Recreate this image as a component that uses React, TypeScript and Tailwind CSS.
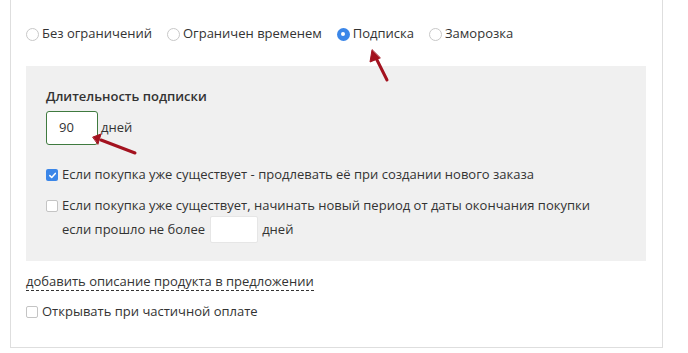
import React from "react";

function Radio({ checked, label }: { checked?: boolean; label: string }) {
  return (
    <label className="flex items-center gap-[3px]">
      {checked ? (
        <span className="w-[13px] h-[13px] rounded-full bg-[#3b86e8] flex items-center justify-center">
          <span className="w-[4px] h-[4px] rounded-full bg-white" />
        </span>
      ) : (
        <span className="w-[13px] h-[13px] rounded-full border border-[#c8c8c8] bg-white" />
      )}
      <span>{label}</span>
    </label>
  );
}

function Check({ checked }: { checked?: boolean }) {
  return checked ? (
    <span className="w-[12px] h-[12px] rounded-[2px] bg-[#3b86e8] flex items-center justify-center shrink-0">
      <svg width="9" height="9" viewBox="0 0 9 9">
        <path d="M1.8 4.6 L3.7 6.5 L7.3 2.4" stroke="white" strokeWidth="1.5" fill="none" strokeLinecap="round" strokeLinejoin="round" />
      </svg>
    </span>
  ) : (
    <span className="w-[12px] h-[12px] rounded-[2px] border border-[#c4c4c4] bg-white shrink-0" />
  );
}

export default function App() {
  return (
    <div className="relative w-[688px] h-[353px] bg-white text-[13px] text-[#333]" style={{ fontFamily: "'Open Sans', sans-serif" }}>
      <div className="ml-[10px] w-[653px] h-[348px] border-x border-b border-[#dedede] pl-[15px] pt-[25px]">
        <div className="flex items-center gap-[15px] h-[18px]">
          <Radio label="Без ограничений" />
          <Radio label="Ограничен временем" />
          <Radio checked label="Подписка" />
          <Radio label="Заморозка" />
        </div>
        <div className="mt-[23px] w-[620px] h-[195px] bg-[#f0f0f0] pl-[20px] pt-[21px]">
          <div className="font-semibold h-[18px] leading-[18px]">Длительность подписки</div>
          <div className="mt-[6px] flex items-center gap-[3px]">
            <div className="w-[52px] h-[34px] rounded-[3px] border border-[#3f7a3f] bg-white flex items-center pl-[12px]">90</div>
            <span>дней</span>
          </div>
          <div className="mt-[21px] flex items-center gap-[4px] h-[18px]">
            <Check checked />
            <span>Если покупка уже существует - продлевать её при создании нового заказа</span>
          </div>
          <div className="mt-[13px] flex items-center gap-[4px] h-[18px]">
            <Check />
            <span>Если покупка уже существует, начинать новый период от даты окончания покупки</span>
          </div>
          <div className="flex items-center pl-[16px] mt-[1px]">
            <span>если прошло не более</span>
            <div className="ml-[5px] w-[48px] h-[27px] bg-white border border-[#e6e6e6] rounded-[2px]" />
            <span className="ml-[4px]">дней</span>
          </div>
        </div>
        <div className="mt-[11px] inline-block leading-[18px] border-b border-dashed border-[#333]">добавить описание продукта в предложении</div>
        <div className="mt-[11px] flex items-center gap-[4px] h-[18px]">
          <Check />
          <span>Открывать при частичной оплате</span>
        </div>
      </div>
      <svg className="absolute left-0 top-0 pointer-events-none" width="688" height="353">
        <g stroke="#a3121f" strokeWidth="3" fill="#a3121f" strokeLinecap="round">
          <line x1="387" y1="80" x2="376" y2="58" />
          <polygon points="372,50 370,62 380,58" strokeWidth="1" />
          <line x1="135" y1="153" x2="101" y2="140" />
          <polygon points="93,137 101,134 98,144" strokeWidth="1" />
        </g>
      </svg>
    </div>
  );
}
